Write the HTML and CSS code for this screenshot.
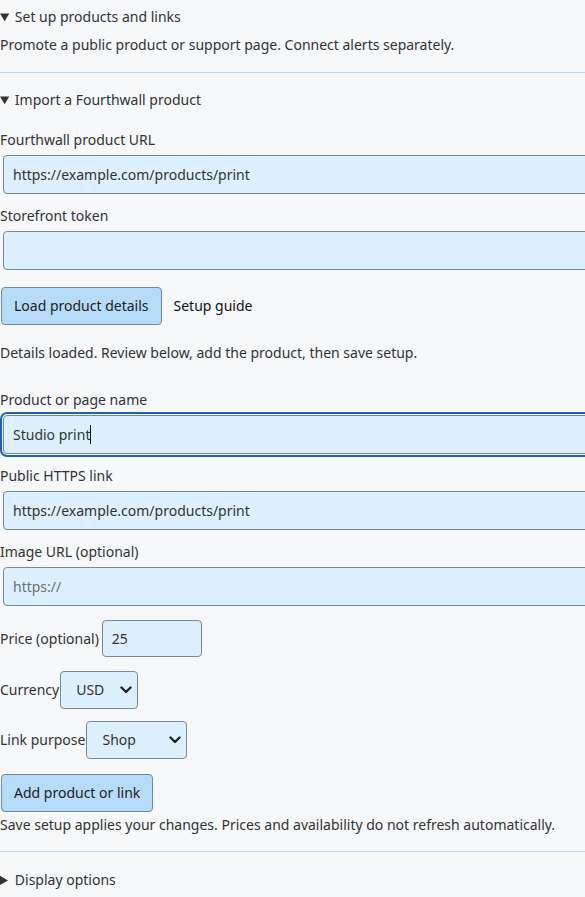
FILE: index.html
```html
<!DOCTYPE html>
<html lang="en">
<head>
<meta charset="utf-8">
<title>Set up products and links</title>
<link rel="stylesheet" href="styles.css">
</head>
<body>
<main class="page">
  <details class="panel intro" open>
    <summary class="panel-title">Set up products and links</summary>
    <p class="hint">Promote a public product or support page. Connect alerts separately.</p>
  </details>

  <hr class="divider">

  <details class="panel import" open>
    <summary class="panel-title">Import a Fourthwall product</summary>

    <div class="field first">
      <label class="field-label" for="fw-url">Fourthwall product URL</label>
      <input class="text-input" id="fw-url" type="text" value="https://example.com/products/print">
    </div>

    <div class="field">
      <label class="field-label" for="fw-token">Storefront token</label>
      <input class="text-input" id="fw-token" type="text" value="">
    </div>

    <div class="actions">
      <button class="btn" type="button">Load product details</button>
      <a class="plain-link" href="#guide">Setup guide</a>
    </div>

    <p class="status">Details loaded. Review below, add the product, then save setup.</p>

    <div class="field spaced">
      <label class="field-label" for="name">Product or page name</label>
      <span class="caret-wrap">
        <input class="text-input is-focused" id="name" type="text" value="Studio print">
        <span class="caret" aria-hidden="true"></span>
      </span>
    </div>

    <div class="field">
      <label class="field-label" for="link">Public HTTPS link</label>
      <input class="text-input" id="link" type="text" value="https://example.com/products/print">
    </div>

    <div class="field">
      <label class="field-label" for="image">Image URL (optional)</label>
      <input class="text-input" id="image" type="text" placeholder="https://">
    </div>

    <div class="inline-row price-row">
      <label class="inline-label" for="price">Price (optional)</label>
      <input class="text-input small" id="price" type="text" value="25">
    </div>

    <div class="inline-row currency-row">
      <label class="inline-label" for="currency">Currency</label>
      <span class="select-wrap currency">
        <select class="select" id="currency"><option>USD</option><option>EUR</option></select>
        <svg class="chevron" viewBox="0 0 12 8" aria-hidden="true"><path d="M1.5 1.5 L6 6 L10.5 1.5" fill="none" stroke="#222" stroke-width="2.4" stroke-linecap="round" stroke-linejoin="round"/></svg>
      </span>
    </div>

    <div class="inline-row purpose-row">
      <label class="inline-label" for="purpose">Link purpose</label>
      <span class="select-wrap purpose">
        <select class="select" id="purpose"><option>Shop</option><option>Support</option></select>
        <svg class="chevron" viewBox="0 0 12 8" aria-hidden="true"><path d="M1.5 1.5 L6 6 L10.5 1.5" fill="none" stroke="#222" stroke-width="2.4" stroke-linecap="round" stroke-linejoin="round"/></svg>
      </span>
    </div>

    <button class="btn add-btn" type="button">Add product or link</button>
    <p class="note">Save setup applies your changes. Prices and availability do not refresh automatically.</p>
  </details>

  <hr class="divider second">

  <details class="panel display">
    <summary class="panel-title">Display options</summary>
  </details>
</main>
</body>
</html>
```

FILE: styles.css
```css
html, body {
  overflow-x: hidden;
}

body {
  margin: 0;
  background: #f6f8fa;
  color: #333333;
  font-family: "Noto Sans", "Open Sans", sans-serif;
  font-size: 14px;
  line-height: 20px;
}

.page {
  padding-top: 7px;
}

.panel-title {
  line-height: 20px;
  cursor: pointer;
  color: #333333;
}

.hint {
  margin: 8px 0 0;
}

.divider {
  border: 0;
  border-top: 1px solid #bcdcf3;
  margin: 17px 0 0;
  height: 0;
}

.import {
  margin-top: 17px;
}

.field {
  display: flex;
  flex-direction: column;
  align-items: stretch;
  margin-top: 12px;
}

.field.first {
  margin-top: 20px;
}

.field.spaced {
  margin-top: 27px;
}

.field-label {
  display: block;
  line-height: 20px;
}

.text-input {
  box-sizing: content-box;
  width: 100%;
  height: 21px;
  margin: 5px 0 0 3px;
  padding: 8px 9px;
  border: 1px solid #7d8896;
  border-radius: 4px;
  background: #dcf1fd;
  color: #333333;
  font: inherit;
  font-size: 14px;
  outline: none;
}

.text-input::placeholder {
  color: #6a7078;
}

.caret-wrap {
  position: relative;
  display: block;
}

.text-input.is-focused {
  box-shadow: 0 0 0 1px #eef6fc, 0 0 0 3px #1b63b5;
}

.caret {
  position: absolute;
  left: 90px;
  top: 15px;
  width: 1px;
  height: 19px;
  background: #111111;
}

.actions {
  display: flex;
  align-items: center;
  gap: 12px;
  margin-top: 17px;
}

.btn {
  box-sizing: border-box;
  height: 38px;
  margin-left: 1px;
  padding: 0 12px;
  border: 1px solid #6e8aa6;
  border-radius: 4px;
  background: #b6dcfa;
  color: #222222;
  font: inherit;
  font-size: 14px;
  cursor: pointer;
}

.plain-link {
  color: #111111;
  text-decoration: none;
}

.status {
  margin: 18px 0 0;
}

.inline-row {
  display: flex;
  align-items: center;
}

.price-row {
  margin-top: 14px;
}

.price-row .inline-label {
  margin-right: 3px;
}

.text-input.small {
  width: 80px;
  height: 19px;
  margin: 0;
}

.currency-row {
  margin-top: 14px;
}

.purpose-row {
  margin-top: 12px;
}

.select-wrap {
  position: relative;
  display: inline-block;
  margin-left: 1px;
}

.select {
  -webkit-appearance: none;
  appearance: none;
  box-sizing: border-box;
  height: 38px;
  padding: 0 30px 0 15px;
  border: 1px solid #7d8896;
  border-radius: 4px;
  background: #dcf1fd;
  color: #333333;
  font: inherit;
  font-size: 14px;
}

.currency .select {
  width: 78px;
}

.purpose .select {
  width: 101px;
}

.chevron {
  position: absolute;
  right: 6px;
  top: 15px;
  width: 12px;
  height: 8px;
  pointer-events: none;
}

.add-btn {
  display: block;
  margin-top: 15px;
}

.note {
  margin: 3px 0 0;
}

.divider.second {
  margin-top: 16px;
}

.display {
  margin-top: 18px;
}
```
